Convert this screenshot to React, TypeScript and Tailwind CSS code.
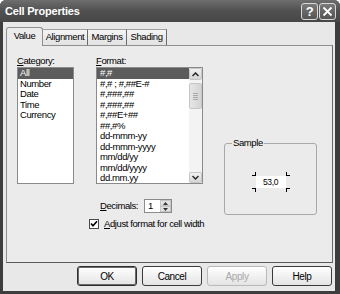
import React from "react";

const categories = ["All", "Number", "Date", "Time", "Currency"];
const formats = [
  "#,#",
  "#,# ; #,##E-#",
  "#,###,##",
  "#,###,##",
  "#,##E+##",
  "##,#%",
  "dd-mmm-yy",
  "dd-mmm-yyyy",
  "mm/dd/yy",
  "mm/dd/yyyy",
  "dd.mm.yy",
];

function Chevron({ up }: { up?: boolean }) {
  return (
    <svg width="7" height="5" viewBox="0 0 7 5">
      <path
        d={up ? "M0.5 4 L3.5 1 L6.5 4" : "M0.5 1 L3.5 4 L6.5 1"}
        fill="none"
        stroke="#2a2a2a"
        strokeWidth="1.5"
      />
    </svg>
  );
}

function Btn({ label, disabled, def }: { label: string; disabled?: boolean; def?: boolean }) {
  return (
    <div
      className={
        "w-[60px] h-[20px] rounded-[3px] border flex items-center justify-center text-[10px] bg-gradient-to-b from-[#ffffff] to-[#e4e4e4] " +
        (disabled
          ? "border-[#b9b9b9] text-[#a9a9a9]"
          : def
          ? "border-[#2e2e2e] text-black shadow-[inset_0_0_0_1px_#6a6a6a]"
          : "border-[#3a3a3a] text-black")
      }
    >
      {label}
    </div>
  );
}

export default function App() {
  return (
    <div className="w-[340px] h-[294px] bg-[#3d3d3d] rounded-t-[6px] flex flex-col overflow-hidden font-['Liberation_Sans',sans-serif] tracking-[-0.4px] text-black">
      {/* Title bar */}
      <div className="h-[22px] shrink-0 flex items-center pl-[5px] pr-[4px] bg-gradient-to-b from-[#6e6e6e] via-[#505050] to-[#474747]">
        <div className="flex-1 text-white font-bold text-[11px] tracking-[-0.2px]">
          Cell Properties
        </div>
        <div className="flex gap-[1px]">
          <div className="w-[17px] h-[17px] rounded-[3px] border border-[#d8d8d8] bg-gradient-to-b from-[#7a7a7a] to-[#555555] flex items-center justify-center text-white font-bold text-[13px] leading-none">
            ?
          </div>
          <div className="w-[17px] h-[17px] rounded-[3px] border border-[#d8d8d8] bg-gradient-to-b from-[#7a7a7a] to-[#555555] flex items-center justify-center">
            <svg width="11" height="11" viewBox="0 0 11 11">
              <path d="M1.5 1.5 L9.5 9.5 M9.5 1.5 L1.5 9.5" stroke="#ffffff" strokeWidth="1.8" />
            </svg>
          </div>
        </div>
      </div>

      {/* Body */}
      <div className="flex-1 ml-[3px] mr-[5px] mb-[3px] bg-[#e8e8e8] flex flex-col pt-[4px] text-[9.5px]">
        {/* Tabs */}
        <div className="flex items-end h-[19px] pl-[3px]">
          <div className="relative z-10 w-[37px] h-[19px] -mb-px bg-[#ebebeb] border border-b-0 border-[#8f8f8f] rounded-t-[3px] flex items-center justify-center pb-[1px]">
            Value
          </div>
          <div className="w-[45px] h-[16px] border-t border-r border-[#a0a0a0] border-r-[#6a6a6a] bg-gradient-to-b from-[#f4f4f4] to-[#e2e2e2] flex items-center justify-center">
            Alignment
          </div>
          <div className="w-[39px] h-[16px] border-t border-r border-[#a0a0a0] border-r-[#6a6a6a] bg-gradient-to-b from-[#f4f4f4] to-[#e2e2e2] flex items-center justify-center">
            Margins
          </div>
          <div className="w-[40px] h-[16px] border-t border-r border-[#a0a0a0] border-r-[#6a6a6a] bg-gradient-to-b from-[#f4f4f4] to-[#e2e2e2] flex items-center justify-center">
            Shading
          </div>
        </div>

        {/* Panel */}
        <div className="ml-[3px] mr-[2px] h-[218px] bg-[#ebebeb] border border-[#8f8f8f] border-r-[#6c6c6c] border-b-[#5c5c5c] pt-[9px] pl-[10px] flex items-start">
          {/* Category */}
          <div className="w-[57px] shrink-0 flex flex-col">
            <div className="h-[11px] leading-[11px]">
              <span className="underline underline-offset-1">C</span>ategory:
            </div>
            <div className="mt-[1px] w-[57px] h-[117px] bg-white border border-[#8a8a8a]">
              {categories.map((c, i) => (
                <div
                  key={c}
                  className={
                    "h-[10.5px] leading-[10.5px] pl-[2px] " +
                    (i === 0 ? "bg-[#5c5c5c] text-white" : "")
                  }
                >
                  {c}
                </div>
              ))}
            </div>
          </div>

          {/* Format */}
          <div className="ml-[22px] w-[107px] shrink-0 flex flex-col">
            <div className="h-[11px] leading-[11px]">
              <span className="underline underline-offset-1">F</span>ormat:
            </div>
            <div className="mt-[1px] w-[107px] h-[117px] bg-white border border-[#8a8a8a] flex">
              <div className="flex-1">
                {formats.map((f, i) => (
                  <div
                    key={i}
                    className={
                      "h-[10.5px] leading-[10.5px] pl-[3px] whitespace-pre " +
                      (i === 0 ? "bg-[#5c5c5c] text-white" : "")
                    }
                  >
                    {f}
                  </div>
                ))}
              </div>
              <div className="w-[13px] bg-[#f3f3f3] flex flex-col">
                <div className="h-[12px] rounded-[2px] border border-[#c6c6c6] bg-gradient-to-b from-[#f2f2f2] to-[#d6d6d6] flex items-center justify-center">
                  <Chevron up />
                </div>
                <div className="flex-1 pt-[3px]">
                  <div className="h-[26px] rounded-[2px] border border-[#c6c6c6] bg-gradient-to-r from-[#e6e6e6] to-[#d4d4d4] flex flex-col items-center justify-center gap-[1px]">
                    <div className="w-[5px] h-px bg-[#a8a8a8]" />
                    <div className="w-[5px] h-px bg-[#a8a8a8]" />
                    <div className="w-[5px] h-px bg-[#a8a8a8]" />
                    <div className="w-[5px] h-px bg-[#a8a8a8]" />
                  </div>
                </div>
                <div className="h-[11px] rounded-[2px] border border-[#c6c6c6] bg-gradient-to-b from-[#f2f2f2] to-[#d6d6d6] flex items-center justify-center">
                  <Chevron />
                </div>
              </div>
            </div>

            {/* Decimals */}
            <div className="mt-[15px] ml-[4px] h-[14px] flex items-center">
              <div className="leading-[14px] w-[37px]">
                <span className="underline underline-offset-1">D</span>ecimals:
              </div>
              <div className="ml-[7px] w-[28px] h-[14px] bg-white border border-[#8a8a8a] flex">
                <div className="flex-1 pl-[3px] leading-[12px]">1</div>
                <div className="w-[11px] flex flex-col">
                  <div className="flex-1 border border-[#c6c6c6] bg-[#e2e2e2] flex items-center justify-center">
                    <svg width="5" height="3" viewBox="0 0 5 3">
                      <path d="M0 3 L2.5 0 L5 3 Z" fill="#333" />
                    </svg>
                  </div>
                  <div className="flex-1 border border-[#c6c6c6] bg-[#e2e2e2] flex items-center justify-center">
                    <svg width="5" height="3" viewBox="0 0 5 3">
                      <path d="M0 0 L2.5 3 L5 0 Z" fill="#333" />
                    </svg>
                  </div>
                </div>
              </div>
            </div>

            {/* Checkbox */}
            <div className="mt-[6px] -ml-[7px] h-[10px] flex items-center whitespace-nowrap">
              <div className="w-[10px] h-[10px] shrink-0 bg-white border border-[#4a4a4a] flex items-center justify-center">
                <svg width="8" height="8" viewBox="0 0 8 8">
                  <path d="M1 3.5 L3 5.8 L7 1.2" fill="none" stroke="#000" strokeWidth="1.6" />
                </svg>
              </div>
              <div className="ml-[5px] leading-[10px]">
                <span className="underline underline-offset-1">A</span>djust format for cell width
              </div>
            </div>
          </div>

          {/* Sample */}
          <div className="ml-[21px] mt-[88px] relative w-[93px] h-[72px] shrink-0 border border-[#a9a9a9] rounded-[3px]">
            <div className="absolute -top-[7px] left-[7px] px-[1px] bg-[#ebebeb] leading-[12px]">
              Sample
            </div>
            <div className="flex justify-center pt-[32px]">
              <div className="relative w-[30px] h-[12px] bg-white flex items-center justify-center text-[8.5px] leading-none">
                53,0
                <div className="absolute -left-[4px] -top-[4px] w-[4px] h-[4px] border-r border-b border-black" />
                <div className="absolute -right-[4px] -top-[4px] w-[4px] h-[4px] border-l border-b border-black" />
                <div className="absolute -left-[4px] -bottom-[4px] w-[4px] h-[4px] border-r border-t border-black" />
                <div className="absolute -right-[4px] -bottom-[4px] w-[4px] h-[4px] border-l border-t border-black" />
              </div>
            </div>
          </div>
        </div>

        {/* Buttons */}
        <div className="mt-[3px] pr-[3px] flex justify-end gap-[5px]">
          <Btn label="OK" def />
          <Btn label="Cancel" />
          <Btn label="Apply" disabled />
          <Btn label="Help" />
        </div>
      </div>
    </div>
  );
}
